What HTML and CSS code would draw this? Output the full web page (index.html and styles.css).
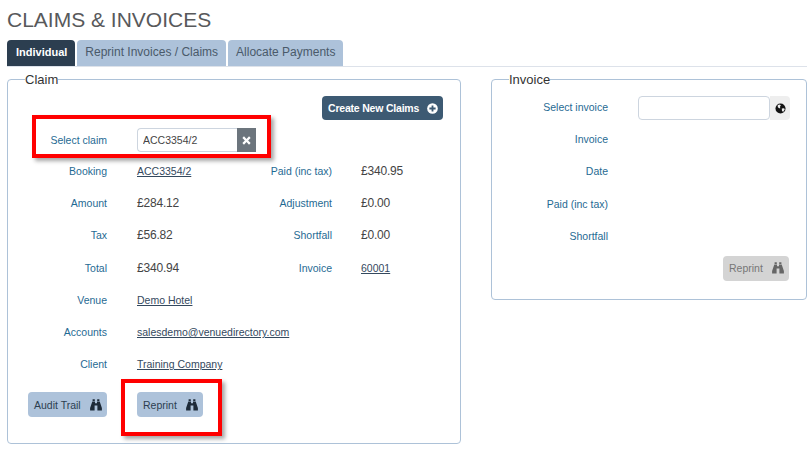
FILE: index.html
```html
<!DOCTYPE html>
<html lang="en">
<head>
  <meta charset="UTF-8" />
  <title>Claims &amp; Invoices</title>
  <link rel="stylesheet" href="styles.css">
</head>
<body>
  <svg class="icon-defs" width="0" height="0">
    <symbol id="binoculars" viewBox="0 0 12 12">
      <path d="M2.6 0.3h2.2v1.7h-2.2zM7.2 0.3h2.2v1.7h-2.2zM2.3 2.6h2.7v1.6h2v-1.6h2.7l2.2 6.4v2.6h-4.5v-5.2h-2.8v5.2h-4.5v-2.6z"/>
    </symbol>
  </svg>

  <h1 class="title">CLAIMS &amp; INVOICES</h1>

  <div class="tabs">
    <a class="tab active">Individual</a>
    <a class="tab">Reprint Invoices / Claims</a>
    <a class="tab">Allocate Payments</a>
  </div>

  <div class="panels">
    <fieldset class="panel claim-panel">
      <legend>Claim</legend>
      <div class="panel-actions">
        <a class="btn btn-dark">Create New Claims
          <svg class="plus" viewBox="0 0 12 12" width="11" height="11"><circle cx="6" cy="6" r="5.8" fill="#fff"/><path d="M5 2.6h2V5h2.4v2H7v2.4H5V7H2.6V5H5z" fill="#3d5a73"/></svg>
        </a>
      </div>

      <div class="select-row">
        <label class="label">Select claim</label>
        <div class="input-wrap">
          <input class="input" type="text" value="ACC3354/2" />
          <span class="clear-btn">
            <svg viewBox="0 0 10 10" width="9" height="9"><path d="M2.2 0.4L5 3.2 7.8 0.4l1.8 1.8L6.8 5l2.8 2.8-1.8 1.8L5 6.8 2.2 9.6 0.4 7.8 3.2 5 0.4 2.2z" fill="#fff"/></svg>
          </span>
        </div>
      </div>

      <div class="claim-grid">
        <span class="label">Booking</span><a class="link">ACC3354/2</a>
        <span class="label">Paid (inc tax)</span><span class="value side">£340.95</span>

        <span class="label">Amount</span><span class="value">£284.12</span>
        <span class="label">Adjustment</span><span class="value side">£0.00</span>

        <span class="label">Tax</span><span class="value">£56.82</span>
        <span class="label">Shortfall</span><span class="value side">£0.00</span>

        <span class="label">Total</span><span class="value">£340.94</span>
        <span class="label">Invoice</span><a class="link side">60001</a>

        <span class="label">Venue</span><a class="link wide">Demo Hotel</a>
        <span class="label">Accounts</span><a class="link wide">salesdemo@venuedirectory.com</a>
        <span class="label">Client</span><a class="link wide">Training Company</a>
      </div>

      <div class="claim-buttons">
        <a class="btn btn-blue audit">Audit Trail <svg class="binoc"><use href="#binoculars"/></svg></a>
        <a class="btn btn-blue">Reprint <svg class="binoc"><use href="#binoculars"/></svg></a>
      </div>

      <div class="callout callout-select"></div>
      <div class="callout callout-reprint"></div>
    </fieldset>

    <fieldset class="panel invoice-panel">
      <legend>Invoice</legend>
      <div class="invoice-grid">
        <span class="label">Select invoice</span>
        <div class="input-wrap">
          <input class="input invoice-input" type="text" />
          <span class="globe-btn">
            <svg viewBox="0 0 12 12" width="11" height="11"><circle cx="6" cy="6" r="5.5" fill="#111"/><path d="M3 2.2l2.4-.6 1 1.2-1 1.4.4 1.6-1.4-.2L3 4.4zM7.4 6l2.6-.4.6 1.6-1.8 2.6-1.2-1.4z" fill="#eee"/></svg>
          </span>
        </div>
        <span class="label">Invoice</span><span></span>
        <span class="label">Date</span><span></span>
        <span class="label">Paid (inc tax)</span><span></span>
        <span class="label">Shortfall</span><span></span>
      </div>
      <div class="panel-actions invoice-actions">
        <a class="btn btn-disabled">Reprint <svg class="binoc"><use href="#binoculars"/></svg></a>
      </div>
    </fieldset>
  </div>
</body>
</html>
```

FILE: styles.css
```css
* {
  margin: 0;
  padding: 0;
  box-sizing: border-box;
}

body {
  font-family: 'Liberation Sans', Arial, sans-serif;
  font-size: 10.5px;
  color: #444;
  background: #fff;
  padding: 0 4px 0 7px;
  overflow: hidden;
}

.icon-defs {
  position: absolute;
}

.title {
  font-size: 21px;
  font-weight: 400;
  line-height: 24px;
  color: #58595b;
  padding-top: 8px;
  margin-bottom: 8px;
}

.tabs {
  display: flex;
  gap: 2px;
  height: 27px;
  border-bottom: 1px solid #dde2ea;
}

.tab {
  height: 26px;
  line-height: 25px;
  padding: 0 8px;
  font-size: 12px;
  color: #4a5a6a;
  background: #adc2da;
  border-radius: 4px 4px 0 0;
}

.tab.active {
  padding: 0 8px 0 9px;
  font-size: 11px;
  font-weight: 700;
  color: #fff;
  background: #2c3e50;
}

.panels {
  display: flex;
  align-items: flex-start;
  gap: 30px;
  margin-top: 5px;
}

.panel {
  position: relative;
  border: 1px solid #adc2d8;
  border-radius: 4px;
  background: #fff;
}

.panel legend {
  margin-left: 17px;
  font-size: 13px;
  line-height: 15px;
  color: #333;
}

.claim-panel {
  width: 454px;
  height: 372px;
}

.invoice-panel {
  width: 316px;
  height: 228px;
}

.panel-actions {
  display: flex;
  justify-content: flex-end;
  padding: 9px 17px 0 0;
}

.btn {
  display: inline-flex;
  align-items: center;
  justify-content: space-between;
  height: 25px;
  padding: 0 5px 0 6px;
  border-radius: 4px;
  white-space: nowrap;
}

.btn-dark {
  width: 121px;
  height: 24px;
  font-weight: 700;
  letter-spacing: -0.2px;
  color: #fff;
  background: #3d5a73;
}

.btn-blue {
  color: #2c3e50;
  background: #adc2da;
}

.btn-disabled {
  width: 66px;
  color: #777;
  background: #d4d4d4;
}

.binoc {
  width: 12px;
  height: 12px;
  fill: #1d2a38;
}

.btn-disabled .binoc {
  fill: #666;
}

.select-row {
  display: grid;
  grid-template-columns: 99px 1fr;
  column-gap: 30px;
  align-items: center;
  margin-top: 8px;
  height: 24px;
}

.label {
  text-align: right;
  color: #1f6a93;
}

.input-wrap {
  display: flex;
  width: 119px;
}

.input {
  flex: 1;
  min-width: 0;
  height: 24px;
  padding: 0 5px;
  border: 1px solid #cdd5df;
  border-right: none;
  border-radius: 4px 0 0 4px;
  font: 10.5px 'Liberation Sans', Arial, sans-serif;
  color: #444;
  outline: none;
}

.clear-btn {
  display: flex;
  align-items: center;
  justify-content: center;
  width: 19px;
  height: 24px;
  background: #6c757d;
}

.claim-grid {
  display: grid;
  grid-template-columns: 99px 76px 89px 1fr;
  grid-auto-rows: 32.2px;
  column-gap: 30px;
  align-items: center;
  margin-top: 3px;
}

.claim-grid .wide {
  grid-column: 2 / 5;
}

.claim-grid .wide + .label {
  grid-column: 1;
}

.side {
  margin-left: -1px;
}

.value {
  font-size: 12px;
  letter-spacing: -0.2px;
  color: #444;
}

.link {
  color: #34495e;
  text-decoration: underline;
}

.claim-buttons {
  display: flex;
  gap: 30px;
  margin-left: 20px;
  padding-top: 12px;
}

.claim-buttons .btn {
  width: 66px;
}

.claim-buttons .audit {
  width: 79px;
}

.invoice-grid {
  display: grid;
  grid-template-columns: 116px 1fr;
  grid-auto-rows: 32.2px;
  column-gap: 30px;
  align-items: center;
  padding-top: 4px;
}

.invoice-grid .input-wrap {
  width: 152px;
  margin-top: 2px;
}

.invoice-input {
  flex: none;
  width: 132px;
  border-right: 1px solid #cdd5df;
  border-radius: 4px;
}

.globe-btn {
  display: flex;
  align-items: center;
  justify-content: center;
  width: 20px;
  height: 24px;
  background: #eeeeee;
  border-radius: 0 4px 4px 0;
}

.invoice-actions {
  padding-top: 4px;
}

.callout {
  position: absolute;
  border: 4px solid #f00;
  box-shadow: 3px 3px 4px rgba(0, 0, 0, 0.35);
  pointer-events: none;
}

.callout-select {
  left: 24px;
  top: 28px;
  width: 239px;
  height: 43px;
}

.callout-reprint {
  left: 113px;
  top: 292px;
  width: 101px;
  height: 57px;
}
```
